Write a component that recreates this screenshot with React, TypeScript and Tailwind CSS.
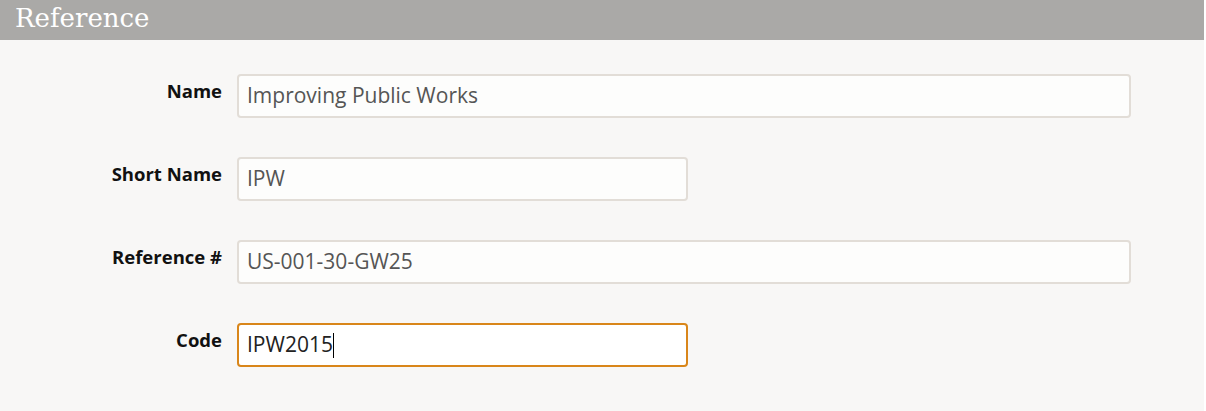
import React from 'react';

interface Field {
  label: string;
  value: string;
  wide: boolean;
  focused?: boolean;
}

const fields: Field[] = [
  { label: 'Name', value: 'Improving Public Works', wide: true },
  { label: 'Short Name', value: 'IPW', wide: false },
  { label: 'Reference #', value: 'US-001-30-GW25', wide: true },
  { label: 'Code', value: 'IPW2015', wide: false, focused: true },
];

export default function App() {
  return (
    <div className="w-[1206px] h-[411px] bg-white font-['Open_Sans',sans-serif]">
      <div className="w-[1204px] h-full bg-[#f8f7f6]">
        {/* Section header */}
        <div className="h-[40px] bg-[#aaa9a7] pl-[15px] flex items-center">
          <h2 className="text-[26px] leading-none text-white font-['DejaVu_Serif',serif] -mt-[4px]">
            Reference
          </h2>
        </div>

        {/* Form rows */}
        <div className="pt-[34px] flex flex-col gap-[39px]">
          {fields.map((f) => (
            <div key={f.label} className="flex items-start">
              <label className="w-[222px] text-right pt-[4px] text-[18.5px] leading-[26px] font-bold text-[#111]">
                {f.label}
              </label>
              <div
                className={`ml-[15px] h-[44px] rounded-[4px] border-2 flex items-center pl-[8px] text-[21px] ${
                  f.wide ? 'w-[894px]' : 'w-[451px]'
                } ${
                  f.focused
                    ? 'border-[#d9861a] bg-white text-[#222]'
                    : 'border-[#e2ddd7] bg-[#fdfdfc] text-[#555]'
                }`}
              >
                <span>{f.value}</span>
                {f.focused && <span className="w-px h-[25px] bg-black" />}
              </div>
            </div>
          ))}
        </div>
      </div>
    </div>
  );
}
